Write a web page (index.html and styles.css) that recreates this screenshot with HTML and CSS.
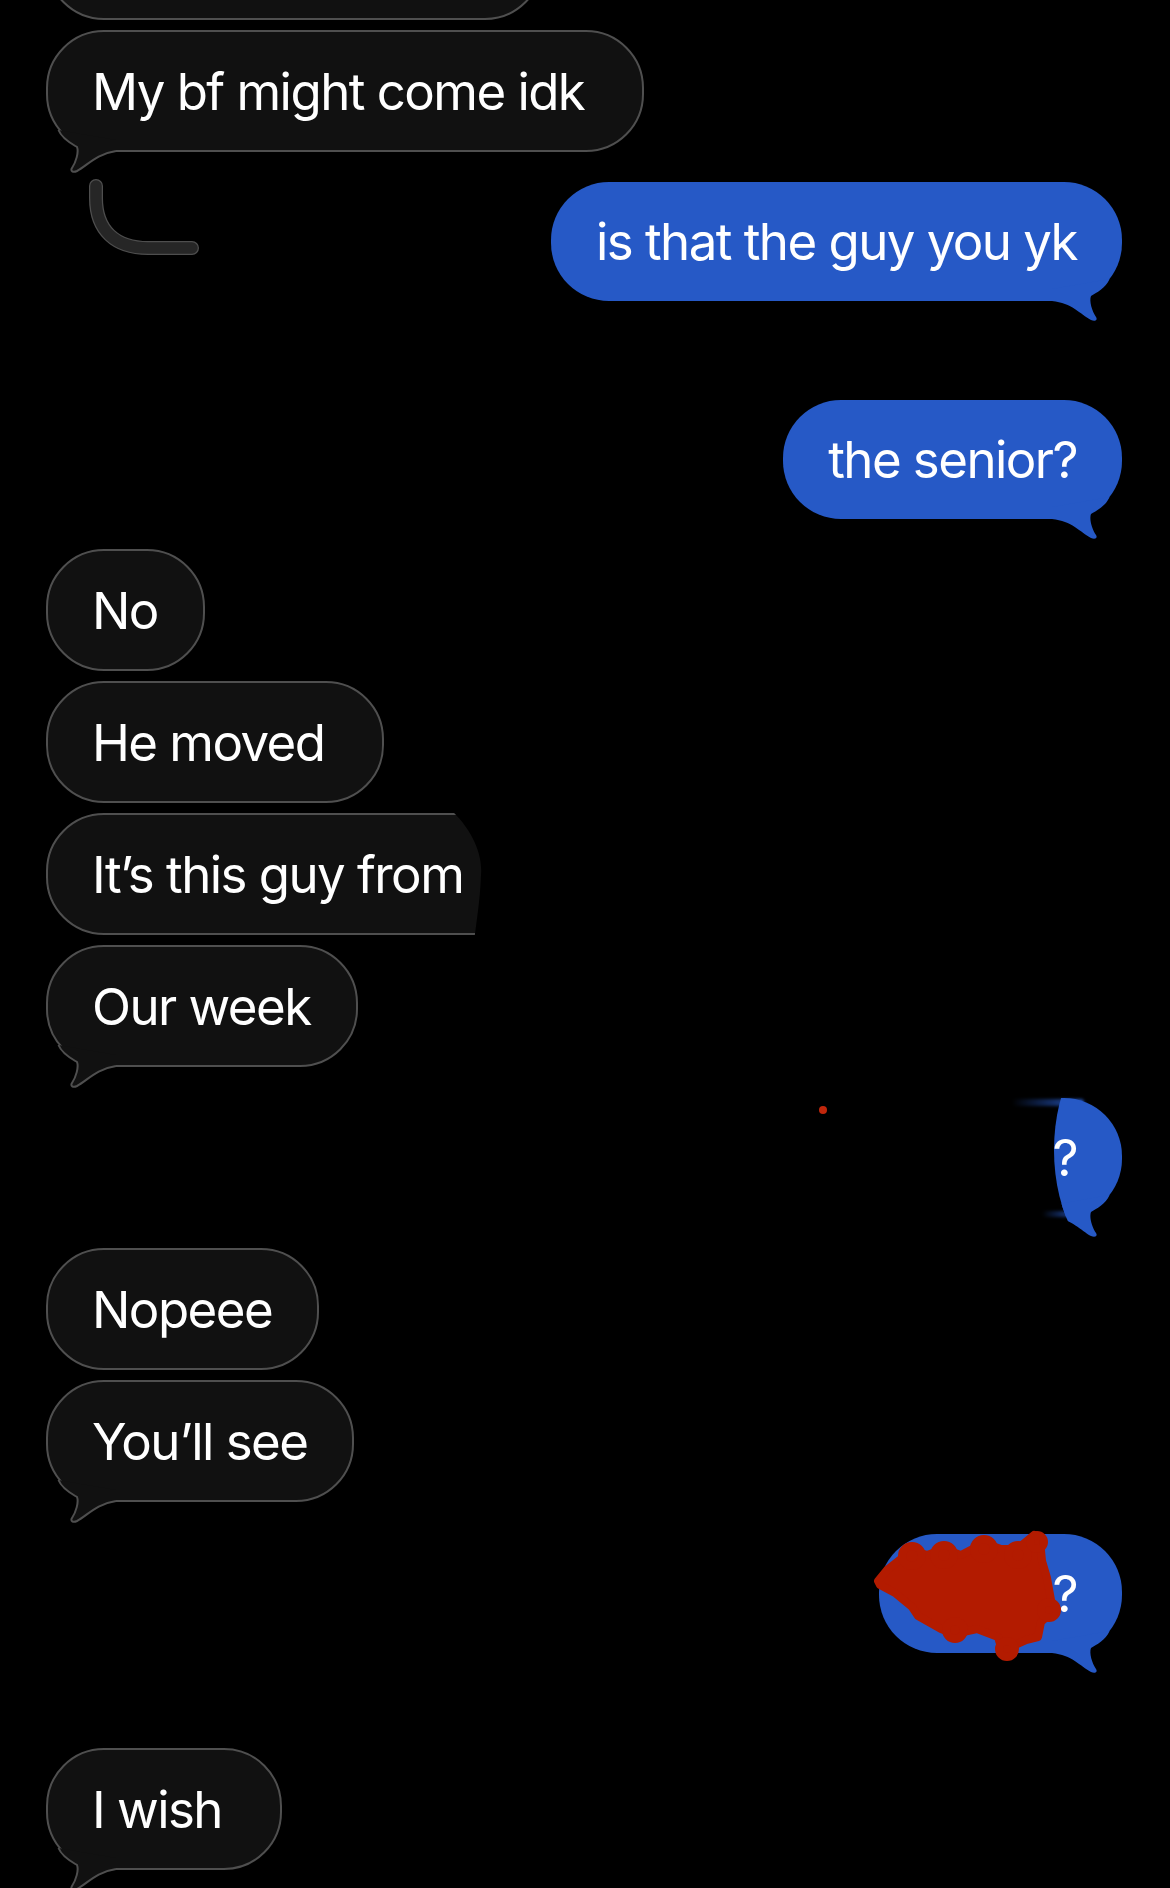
FILE: index.html
```html
<!DOCTYPE html>
<html lang="en">
<head>
<meta charset="utf-8">
<title>Messages</title>
<link rel="stylesheet" href="styles.css">
</head>
<body>
<div class="thread">

  <div class="group in first">
    <div class="msg"><div class="bubble in top-cut"> </div></div>
    <div class="msg">
      <div class="bubble in">My bf might come idk </div>
      <svg class="tail" viewBox="0 0 72 52"><path class="tail-fill-in" d="M12.5 8 C16 17 26 22 31 25 C33 30 30 40 26 46 C24 49 27 51 31 49 C42 43 50 32 70 30 L70 18 Z"/><path class="tail-line" d="M12.5 8 C16 17 26 22 31 25 C33 30 30 40 26 46 C24 49 27 51 31 49 C42 43 50 32 70 29"/></svg>
      <svg class="connector" viewBox="0 0 160 230"><path class="conn-outer" d="M50 156 L50 168 C50 200 69 218 102 218 L146 218"/><path class="conn-inner" d="M50 156 L50 168 C50 200 69 218 102 218 L146 218"/></svg>
    </div>
  </div>

  <div class="group out">
    <div class="msg">
      <div class="bubble out">is that the guy you yk</div>
      <svg class="tail right" viewBox="0 0 72 52"><path class="tail-fill-out" d="M12.5 8 C16 17 26 22 31 25 C33 30 30 40 26 46 C24 49 27 51 31 49 C42 43 50 32 70 30 L70 18 Z"/></svg>
    </div>
  </div>

  <div class="group out spaced">
    <div class="msg">
      <div class="bubble out">the senior?</div>
      <svg class="tail right" viewBox="0 0 72 52"><path class="tail-fill-out" d="M12.5 8 C16 17 26 22 31 25 C33 30 30 40 26 46 C24 49 27 51 31 49 C42 43 50 32 70 30 L70 18 Z"/></svg>
    </div>
  </div>

  <div class="group in">
    <div class="msg"><div class="bubble in">No</div></div>
    <div class="msg"><div class="bubble in">He moved </div></div>
    <div class="msg"><div class="bubble in cut">It’s this guy from</div></div>
    <div class="msg">
      <div class="bubble in">Our week</div>
      <svg class="tail" viewBox="0 0 72 52"><path class="tail-fill-in" d="M12.5 8 C16 17 26 22 31 25 C33 30 30 40 26 46 C24 49 27 51 31 49 C42 43 50 32 70 30 L70 18 Z"/><path class="tail-line" d="M12.5 8 C16 17 26 22 31 25 C33 30 30 40 26 46 C24 49 27 51 31 49 C42 43 50 32 70 29"/></svg>
    </div>
  </div>

  <div class="group out marked">
    <span class="dot"></span>
    <span class="smear top"></span>
    <span class="smear bottom"></span>
    <div class="msg erased">
      <div class="bubble out wide">?</div>
      <svg class="tail right" viewBox="0 0 72 52"><path class="tail-fill-out" d="M12.5 8 C16 17 26 22 31 25 C33 30 30 40 26 46 C24 49 27 51 31 49 C42 43 50 32 70 30 L70 18 Z"/></svg>
    </div>
  </div>

  <div class="group in after-erased">
    <div class="msg"><div class="bubble in">Nopeee</div></div>
    <div class="msg">
      <div class="bubble in">You’ll see</div>
      <svg class="tail" viewBox="0 0 72 52"><path class="tail-fill-in" d="M12.5 8 C16 17 26 22 31 25 C33 30 30 40 26 46 C24 49 27 51 31 49 C42 43 50 32 70 30 L70 18 Z"/><path class="tail-line" d="M12.5 8 C16 17 26 22 31 25 C33 30 30 40 26 46 C24 49 27 51 31 49 C42 43 50 32 70 29"/></svg>
    </div>
  </div>

  <div class="group out redacted">
    <div class="msg">
      <div class="bubble out"><span class="hidden-word"></span>?</div>
      <svg class="tail right" viewBox="0 0 72 52"><path class="tail-fill-out" d="M12.5 8 C16 17 26 22 31 25 C33 30 30 40 26 46 C24 49 27 51 31 49 C42 43 50 32 70 30 L70 18 Z"/></svg>
      <svg class="scribble" viewBox="0 0 240 130"><path d="M-1 47 L8 36 L22 25 L33 16 L48 21 L65 15 L82 21 L105 9 L122 15 L138 15 L155 1 L161 6 L163 27 L168 44 L174 77 L162 88 L159 103 L147 106 L134 112 L128 119 L122 113 L119 103 L98 95 L75 100 L62 95 L39 82 L33 73 L16 59 L1 51 Z"/><circle cx="33" cy="22" r="10"/><circle cx="65" cy="21" r="10"/><circle cx="105" cy="15" r="10"/><circle cx="139" cy="21" r="10"/><circle cx="158" cy="8" r="7"/><circle cx="170" cy="76" r="8"/><circle cx="128" cy="115" r="8"/><circle cx="76" cy="96" r="9"/></svg>
    </div>
  </div>

  <div class="group in wish">
    <div class="msg">
      <div class="bubble in">I wish </div>
      <svg class="tail" viewBox="0 0 72 52"><path class="tail-fill-in" d="M12.5 8 C16 17 26 22 31 25 C33 30 30 40 26 46 C24 49 27 51 31 49 C42 43 50 32 70 30 L70 18 Z"/><path class="tail-line" d="M12.5 8 C16 17 26 22 31 25 C33 30 30 40 26 46 C24 49 27 51 31 49 C42 43 50 32 70 29"/></svg>
    </div>
  </div>

</div>
</body>
</html>
```
FILE: styles.css
```css
html, body {
  margin: 0;
  padding: 0;
  background: #000;
}
body {
  width: 1170px;
  height: 1888px;
  overflow: hidden;
  font-family: Inter, "Noto Sans", "DejaVu Sans", sans-serif;
}
.thread {
  display: flex;
  flex-direction: column;
  padding: 0 48px 0 46px;
}
.group {
  display: flex;
  flex-direction: column;
  gap: 10px;
  margin-top: 30px;
}
.group.in { align-items: flex-start; }
.group.out { align-items: flex-end; }
.group.first { margin-top: -102px; }
.group.spaced { margin-top: 99px; }
.group.marked { position: relative; margin-top: 31px; }
.group.after-erased { margin-top: 31px; }
.group.redacted { margin-top: 32px; }
.group.wish { margin-top: 95px; }

.msg { position: relative; }

.bubble {
  font-size: 51px;
  line-height: 63px;
  padding: 28px 45px;
  color: #fff;
  border-radius: 58px;
  white-space: pre;
  letter-spacing: -1.55px;
}
.bubble.in {
  background: #111111;
  border: 2px solid #4f4f4f;
  padding: 27.5px 45px 27.5px 44px;
}
.bubble.out {
  background: #2659c6;
}
.bubble.top-cut { width: 404px; }
.bubble.cut {
  padding-right: 200px;
  clip-path: path('M0 -5 L403 -5 C425 15 437 40 435 62 C434 90 430 110 428 130 L0 130 Z');
}
.bubble.wide { padding-left: 220px; }

.msg.erased {
  clip-path: ellipse(71px 120px at calc(100% + 3px) 52px);
}

.smear {
  position: absolute;
  border-radius: 4px;
  filter: blur(1.5px);
}
.smear.top {
  top: 1px;
  right: 38px;
  width: 72px;
  height: 7px;
  background: linear-gradient(to right, rgba(38, 89, 198, 0), rgba(38, 89, 198, 0.9));
}
.smear.bottom {
  top: 113px;
  right: 46px;
  width: 34px;
  height: 6px;
  background: linear-gradient(to right, rgba(38, 89, 198, 0), rgba(38, 89, 198, 0.8));
}

.hidden-word {
  display: inline-block;
  width: 128px;
}

.tail {
  position: absolute;
  left: 0;
  bottom: -22px;
  width: 72px;
  height: 52px;
  overflow: visible;
}
.tail.right {
  left: auto;
  right: 0;
  transform: scaleX(-1);
}
.tail-fill-in { fill: #111111; }
.tail-fill-out { fill: #2659c6; }
.tail-line {
  fill: none;
  stroke: #4f4f4f;
  stroke-width: 2;
}

.connector {
  position: absolute;
  left: 0;
  top: 0;
  width: 160px;
  height: 230px;
  overflow: visible;
}
.conn-outer {
  fill: none;
  stroke: #4e4e4e;
  stroke-width: 14;
  stroke-linecap: round;
}
.conn-inner {
  fill: none;
  stroke: #262626;
  stroke-width: 11.5;
  stroke-linecap: round;
}

.scribble {
  position: absolute;
  left: 0;
  top: 0;
  width: 240px;
  height: 130px;
  overflow: visible;
}
.scribble path,
.scribble circle {
  fill: #b31b00;
  stroke: #b31b00;
  stroke-width: 8;
  stroke-linejoin: round;
}

.dot {
  position: absolute;
  left: 773px;
  top: 8px;
  width: 8px;
  height: 8px;
  border-radius: 50%;
  background: #c1270c;
}
```
